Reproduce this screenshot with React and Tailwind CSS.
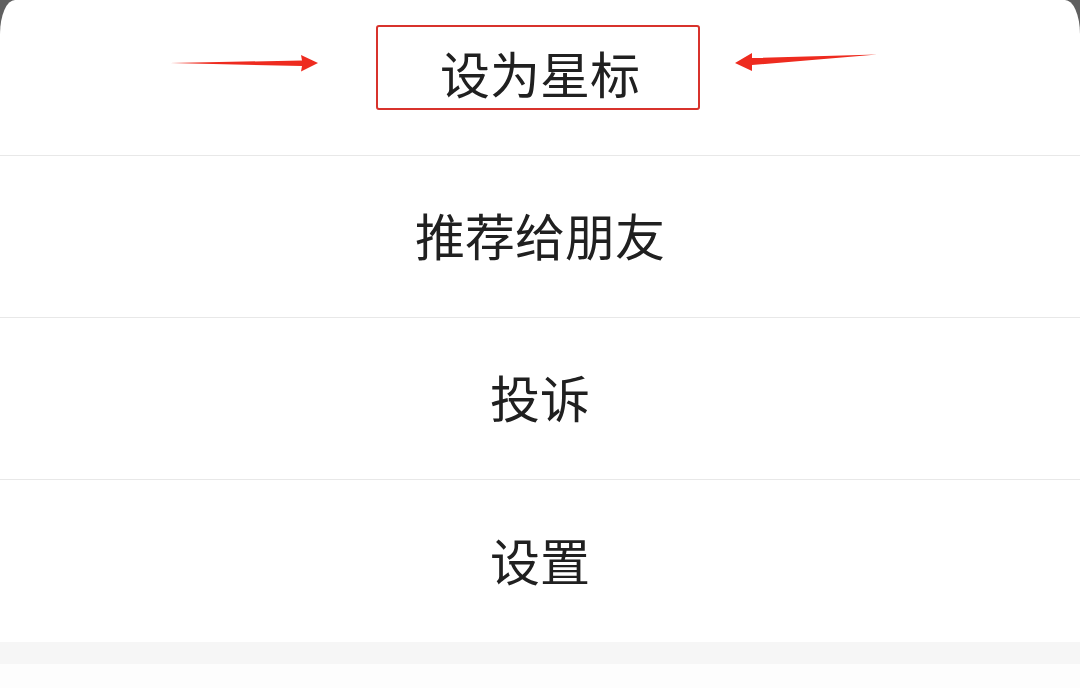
import React from 'react';

const items = ['推荐给朋友', '投诉', '设置'];

const RightArrow = () => (
  <svg className="absolute left-[168px] top-[52px]" width="152" height="22" viewBox="0 0 152 22">
    <path d="M2 11 L134 8.5 L133 3 L150 11 L133 19.5 L134 14 Z" fill="#ee2b1f" />
  </svg>
);

const LeftArrow = () => (
  <svg className="absolute left-[733px] top-[50px]" width="146" height="24" viewBox="0 0 146 24">
    <path d="M144 4.5 L19 8 L19 3 L2 13 L19 21 L19 15 Z" fill="#ee2b1f" />
  </svg>
);

const App = () => {
  return (
    <div className="w-[1080px] h-[688px] bg-[#606060] overflow-hidden" style={{ fontFamily: '"Noto Sans CJK SC", "Noto Sans", sans-serif' }}>
      <div className="h-full bg-white rounded-tl-[15px_34px] rounded-tr-[15px_34px] flex flex-col">
        {/* Starred option with annotation */}
        <div className="relative h-[156px] border-b border-[#e8e8e8] flex items-center justify-center pb-[11px]">
          <div className="absolute left-[376px] top-[25px] w-[324px] h-[85px] border-2 border-[#d8332c] rounded-[3px]" />
          <RightArrow />
          <LeftArrow />
          <span className="text-[50px] leading-none text-[#202020]">设为星标</span>
        </div>

        {items.map((label, i) => (
          <div
            key={label}
            className={
              i < items.length - 1
                ? 'h-[162px] border-b border-[#e8e8e8] flex items-center justify-center pb-[5px]'
                : 'h-[162px] flex items-center justify-center pb-[5px]'
            }
          >
            <span className="text-[50px] leading-none text-[#202020]">{label}</span>
          </div>
        ))}

        <div className="h-[22px] bg-[#f6f6f6]" />
        <div className="flex-1 bg-[#fdfdfd]" />
      </div>
    </div>
  );
};

export default App;
